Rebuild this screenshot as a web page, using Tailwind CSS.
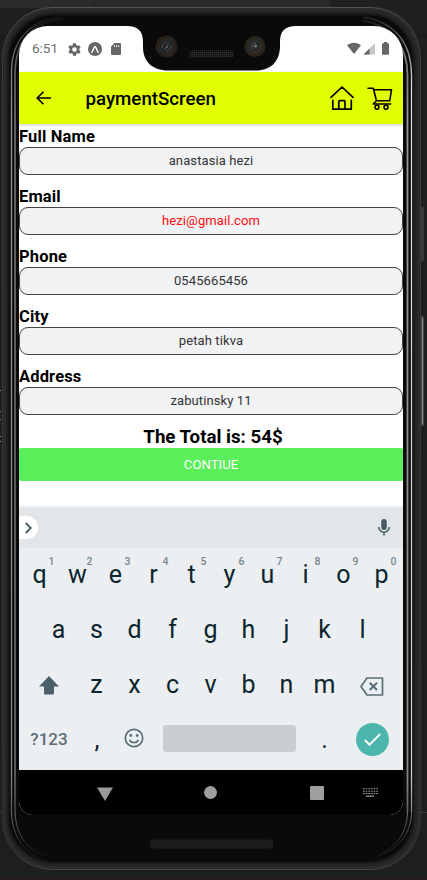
<!DOCTYPE html>
<html lang="en">
<head>
<meta charset="utf-8">
<title>paymentScreen</title>
<script src="https://cdn.jsdelivr.net/npm/@tailwindcss/browser@4"></script>
</head>
<body class="bg-[#1e1e1e] font-[Roboto,sans-serif]">
<div class="relative w-[427px] h-[880px] overflow-hidden pt-[26px] pl-[19px]">
  <!-- device frame -->
  <svg class="absolute inset-0" width="427" height="880" viewBox="0 0 427 880" fill="none">
    <defs>
      <linearGradient id="rim" x1="0" y1="0" x2="0" y2="1"><stop offset="0" stop-color="#555"/><stop offset=".06" stop-color="#3c3c3c"/><stop offset=".95" stop-color="#333"/><stop offset="1" stop-color="#444"/></linearGradient>
      <linearGradient id="shine" gradientUnits="userSpaceOnUse" x1="0" y1="16" x2="0" y2="862"><stop offset="0" stop-color="#111"/><stop offset=".05" stop-color="#777"/><stop offset=".12" stop-color="#999"/><stop offset=".9" stop-color="#888"/><stop offset="1" stop-color="#181818"/></linearGradient>
      <linearGradient id="shineR" gradientUnits="userSpaceOnUse" x1="0" y1="16" x2="0" y2="862"><stop offset="0" stop-color="#222"/><stop offset=".08" stop-color="#ddd"/><stop offset=".9" stop-color="#ccc"/><stop offset="1" stop-color="#181818"/></linearGradient>
      <linearGradient id="fade" gradientUnits="userSpaceOnUse" x1="0" y1="812" x2="0" y2="860"><stop offset="0" stop-color="#777"/><stop offset=".6" stop-color="#333"/><stop offset="1" stop-color="#0e0e0e"/></linearGradient>
      <pattern id="mesh" width="2" height="2" patternUnits="userSpaceOnUse"><rect width="2" height="2" fill="#161616"/><rect width="1" height="1" fill="#363636"/></pattern>
      <pattern id="meshLow" width="2" height="2" patternUnits="userSpaceOnUse"><rect width="2" height="2" fill="#181818"/><rect width="1" height="1" fill="#262626"/></pattern>
    </defs>
    <rect width="427" height="8" fill="#2b2b2b"/><rect x="330" width="97" height="8" fill="#202020"/><rect x="94" width="1" height="7" fill="#222"/>
    <rect y="8" width="427" height="29" fill="#1f1f1f"/><rect y="36" width="427" height="1" fill="#161616"/>
    <path d="M0 812.5H427" stroke="#3c3c3c"/><path d="M0 879.5H427" stroke="#2a171c"/>
    <path d="M0 390.500H1" stroke="#b38867"/><path d="M0 411.500H1M0 419.500H1" stroke="#3d8ca8"/><path d="M0 436.500H1" stroke="#a39a28"/><path d="M0 441.500H1" stroke="#83a67a"/>
    <rect x="420" y="207" width="4" height="54" rx="1" fill="#393939"/>
    <rect x="420" y="316" width="4" height="110" rx="1" fill="#444"/><path d="M422.500 318V424" stroke="#8a8a8a"/>
    <rect x="2.500" y="7.500" width="418" height="862" rx="50" fill="#242424" stroke="url(#rim)"/>
    <rect x="4.500" y="9.500" width="414" height="858" rx="48" stroke="#2d2d2d" stroke-width="2"/>
    <rect x="8.500" y="14.500" width="405" height="848" rx="45" fill="#0a0a0a" stroke="#171717" stroke-width="2"/>
    <path d="M11.500 812V72C11.500 40 30 20 62 17" stroke="url(#shine)" stroke-width="1.300"/>
    <path d="M15 812V75C15 40 31 21 66 19" stroke="url(#shine)" stroke-width="1.600" opacity=".75"/>
    <path d="M11.500 812C12 838 26 856 50 861M15 812C16 836 28 851 46 856" stroke="url(#fade)"/>
    <path d="M411.500 812V75C411.500 45 397 23 364 17" stroke="url(#shineR)" stroke-width="1.300"/>
    <path d="M407.500 812V75C407.500 46 392 26 362 20" stroke="url(#shine)" stroke-width="1.800"/>
    <path d="M411.500 812C411.500 834 396 852 375 857M407.500 812C407 835 394 849 378 855" stroke="url(#fade)"/>
    <rect x="150" y="839.500" width="123" height="9" rx="3" fill="url(#meshLow)"/>
  </svg>

  <main class="relative flex h-[789px] w-[384px] flex-col overflow-hidden rounded-t-[29px] rounded-b-[14px] bg-white">
    <!-- status bar -->
    <div class="relative flex h-[46px] shrink-0 items-center pl-[13px] text-[#666]">
      <span class="w-[36px] text-[13.500px] leading-none text-[#707070]">6:51</span>
      <svg width="13" height="13" viewBox="2 2 20 20" fill="currentColor"><path d="M19.140 12.940c.040-.300.060-.610.060-.940s-.020-.640-.070-.940l2.030-1.580c.180-.140.230-.410.120-.610l-1.920-3.320c-.120-.220-.370-.290-.590-.220l-2.390.960c-.500-.380-1.030-.700-1.620-.940l-.360-2.540c-.040-.240-.240-.410-.480-.410h-3.840c-.240 0-.430.170-.470.410l-.360 2.540c-.590.240-1.130.570-1.620.940l-2.390-.960c-.220-.080-.470 0-.590.220L2.740 8.870c-.120.210-.080.470.120.610l2.030 1.580c-.050.300-.090.630-.090.940s.020.640.070.940l-2.030 1.580c-.180.140-.230.410-.120.610l1.920 3.320c.120.220.370.290.590.220l2.390-.960c.500.380 1.030.700 1.620.940l.360 2.540c.050.240.240.410.480.410h3.840c.240 0 .440-.170.470-.410l.360-2.540c.590-.240 1.130-.560 1.620-.940l2.390.960c.220.080.470 0 .590-.220l1.920-3.320c.120-.220.070-.470-.120-.610zM12 15.600a3.600 3.600 0 110-7.200 3.600 3.600 0 010 7.200z"/></svg>
      <svg class="ml-[7px]" width="14" height="14" viewBox="0 0 14 14"><circle cx="7" cy="7" r="7" fill="currentColor"/><path d="M3.800 10.200C5.200 8.800 6 4.500 7 4.500S8.800 8.800 10.200 10.200" fill="none" stroke="#fff" stroke-width="1.500" stroke-linecap="round"/></svg>
      <svg class="ml-[9px]" width="10" height="12" viewBox="0 0 10 12"><path d="M3.500 0H9a1 1 0 011 1v10a1 1 0 01-1 1H1a1 1 0 01-1-1V3.500z" fill="currentColor"/><path d="M3.500 2v2M5.500 2v2M7.500 2v2" stroke="#fff" stroke-width=".8"/></svg>
      <svg class="ml-auto mr-[14px]" width="42" height="14" viewBox="0 0 42 14"><path d="M0 3.200C4.300-.2 9.700-.2 14 3.200L7 12z" fill="currentColor"/><path d="M28 1V12.500H16.500z" fill="#c6c6c6"/><path d="M22.500 6.500V12.500H16.500z" fill="currentColor"/><path d="M37 0h3v1.300h1.500a.5.500 0 01.500.500V12a.7.700 0 01-.7.700h-5.600A.7.700 0 0135 12V1.800a.5.500 0 01.500-.5H37z" fill="currentColor"/></svg>
      <!-- notch -->
      <svg class="absolute left-0 top-0" width="384" height="46" viewBox="19 26 384 46" fill="none"><path d="M127 26C138 26 143 31 143 42V47C143 62 153 70.500 168 70.500H256C271 70.500 280 61 280 46V42C280 31 285 26 296 26z" fill="#0a0a0a"/>
        <circle cx="166.500" cy="46.500" r="11" fill="#26211c"/><circle cx="166.500" cy="46.500" r="7" fill="#202223" stroke="#34312d"/><path d="M164 50L169 43M162.500 48A5 5 0 01167 42M171 45A5 5 0 01166 51" stroke="#555" stroke-width="1"/><circle cx="167" cy="47" r="1" fill="#666"/>
        <circle cx="255" cy="46.500" r="10.500" fill="#2a251f"/><circle cx="255" cy="46.500" r="6" fill="#242829" stroke="#3a3733"/><path d="M253 49A3.500 3.500 0 01256 43" stroke="#555"/><circle cx="255.500" cy="46" r="1.500" fill="#777"/>
        <rect x="189.500" y="50.500" width="44" height="7" rx="3" fill="url(#mesh)"/></svg>
    </div>
    <!-- header -->
    <header class="z-10 flex h-[52px] shrink-0 items-center bg-[#e2ff00] pl-[17px] pr-[10px] text-black shadow-[0_1px_3px_rgba(0,0,0,0.2)]">
      <svg width="15" height="14" viewBox="0 0 15 14" fill="none" stroke="currentColor" stroke-width="1.600"><path d="M15 7H1.300M7.500.700L1.200 7l6.300 6.300"/></svg>
      <h1 class="ml-[34.500px] mt-[2px] text-[18.700px] font-medium leading-none">paymentScreen</h1>
      <svg class="ml-auto" width="24" height="24" viewBox="0 0 24 24" fill="none" stroke="currentColor" stroke-width="1.700" stroke-linecap="round" stroke-linejoin="round"><path d="M1 11.300L12 1l11 10.300M2.800 14.300v8.900h18.500v-8.900M8.800 23v-7.300c0-.6.4-1 1-1H14c.6 0 1 .4 1 1V23"/></svg>
      <svg class="ml-[13px]" width="26" height="23" viewBox="0 0 26 23" fill="none" stroke="currentColor" stroke-width="1.600" stroke-linecap="round" stroke-linejoin="round"><path d="M1 1.300h5.300l3.200 12.500h13.200l1.800-11H6.700M9.500 13.800L6.300 17h17.400"/><circle cx="10" cy="20.300" r="2"/><circle cx="19" cy="20.300" r="2"/></svg>
    </header>
    <!-- form -->
    <section class="flex h-[383px] shrink-0 flex-col pt-[1px] text-black">
      <label class="flex h-[60px] shrink-0 flex-col pt-[2px] text-[16.500px] font-bold leading-[20px] tracking-[0.150px]">Full Name<span class="flex h-[28px] items-center justify-center rounded-[9px] border border-[#444] bg-[#f1f2f4] text-[13px] font-normal tracking-[0.100px] text-[#333]">anastasia hezi</span></label>
      <label class="flex h-[60px] shrink-0 flex-col pt-[2px] text-[16.500px] font-bold leading-[20px] tracking-[0.150px]">Email<span class="flex h-[28px] items-center justify-center rounded-[9px] border border-[#444] bg-[#f1f2f4] text-[13px] font-normal tracking-[0.100px] text-[#ff0d0d]">hezi@gmail.com</span></label>
      <label class="flex h-[60px] shrink-0 flex-col pt-[2px] text-[16.500px] font-bold leading-[20px] tracking-[0.150px]">Phone<span class="flex h-[28px] items-center justify-center rounded-[9px] border border-[#444] bg-[#f1f2f4] text-[13px] font-normal tracking-[0.100px] text-[#333]">0545665456</span></label>
      <label class="flex h-[60px] shrink-0 flex-col pt-[2px] text-[16.500px] font-bold leading-[20px] tracking-[0.150px]">City<span class="flex h-[28px] items-center justify-center rounded-[9px] border border-[#444] bg-[#f1f2f4] text-[13px] font-normal tracking-[0.100px] text-[#333]">petah tikva</span></label>
      <label class="flex h-[60px] shrink-0 flex-col pt-[2px] text-[16.500px] font-bold leading-[20px] tracking-[0.150px]">Address<span class="flex h-[28px] items-center justify-center rounded-[9px] border border-[#444] bg-[#f1f2f4] text-[13px] font-normal tracking-[0.100px] text-[#333]">zabutinsky 11</span></label>
      <p class="h-[23px] pl-[4px] text-center text-[18.700px] font-bold leading-[24px]">The Total is: 54$</p>
      <button class="h-[33px] shrink-0 rounded-[2px] bg-[#5aee5a] pt-[1px] text-[13.200px] leading-[32px] text-white">CONTIUE</button>
    </section>
    <!-- keyboard -->
    <section class="flex h-[263px] shrink-0 flex-col bg-[#ebeff2] text-[25px] leading-[30px] text-[#0b252e] shadow-[0_-1px_2px_rgba(0,0,0,0.08)]">
      <div class="flex h-[41px] shrink-0 items-center justify-between bg-[#e2e6e9] pr-[13px] text-[#455a64]">
        <span class="flex h-[23px] w-[19px] items-center justify-center rounded-r-full bg-white"><svg width="7" height="12" viewBox="0 0 7 12" fill="none" stroke="currentColor" stroke-width="1.800"><path d="M.8 1l5 5-5 5"/></svg></span>
        <svg width="12" height="17" viewBox="0 0 12 17" fill="none"><rect x="3.300" y="0" width="5.400" height="11" rx="2.700" fill="currentColor"/><path d="M.8 8a5.200 5.200 0 0010.400 0M6 13v3.500" stroke="currentColor" stroke-width="1.500"/></svg>
      </div>
      <div class="flex h-[55px] shrink-0 pl-[1.500px] pt-[12px] text-center">
        <span class="relative w-[38px]">q<sup class="absolute left-[28px] top-[-4px] text-[10.500px] font-medium leading-[11px] text-[#78868c]">1</sup></span>
        <span class="relative w-[38px]">w<sup class="absolute left-[28px] top-[-4px] text-[10.500px] font-medium leading-[11px] text-[#78868c]">2</sup></span>
        <span class="relative w-[38px]">e<sup class="absolute left-[28px] top-[-4px] text-[10.500px] font-medium leading-[11px] text-[#78868c]">3</sup></span>
        <span class="relative w-[38px]">r<sup class="absolute left-[28px] top-[-4px] text-[10.500px] font-medium leading-[11px] text-[#78868c]">4</sup></span>
        <span class="relative w-[38px]">t<sup class="absolute left-[28px] top-[-4px] text-[10.500px] font-medium leading-[11px] text-[#78868c]">5</sup></span>
        <span class="relative w-[38px]">y<sup class="absolute left-[28px] top-[-4px] text-[10.500px] font-medium leading-[11px] text-[#78868c]">6</sup></span>
        <span class="relative w-[38px]">u<sup class="absolute left-[28px] top-[-4px] text-[10.500px] font-medium leading-[11px] text-[#78868c]">7</sup></span>
        <span class="relative w-[38px]">i<sup class="absolute left-[28px] top-[-4px] text-[10.500px] font-medium leading-[11px] text-[#78868c]">8</sup></span>
        <span class="relative w-[38px]">o<sup class="absolute left-[28px] top-[-4px] text-[10.500px] font-medium leading-[11px] text-[#78868c]">9</sup></span>
        <span class="relative w-[38px]">p<sup class="absolute left-[28px] top-[-4px] text-[10.500px] font-medium leading-[11px] text-[#78868c]">0</sup></span>
      </div>
      <div class="flex h-[55px] shrink-0 pl-[20.500px] pt-[12px] text-center">
        <span class="w-[38px]">a</span><span class="w-[38px]">s</span><span class="w-[38px]">d</span><span class="w-[38px]">f</span><span class="w-[38px]">g</span><span class="w-[38px]">h</span><span class="w-[38px]">j</span><span class="w-[38px]">k</span><span class="w-[38px]">l</span>
      </div>
      <div class="flex h-[55px] shrink-0 pt-[12px] text-center">
        <span class="flex w-[58.500px] items-start justify-center pt-[6px] text-[#4a606a]"><svg class="ml-[1px]" width="20" height="19" viewBox="0 0 20 19" fill="currentColor"><path d="M10 0l10 10.500h-5V17.500a1 1 0 01-1 1H6a1 1 0 01-1-1v-7H0z"/></svg></span>
        <span class="w-[38px]">z</span><span class="w-[38px]">x</span><span class="w-[38px]">c</span><span class="w-[38px]">v</span><span class="w-[38px]">b</span><span class="w-[38px]">n</span><span class="w-[38px]">m</span>
        <span class="flex flex-1 items-start justify-center pt-[7px] text-[#5b6d76]"><svg class="mr-[3px]" width="24" height="19" viewBox="0 0 24 19" fill="none" stroke="currentColor" stroke-width="1.700" stroke-linejoin="round"><path d="M7 1h15.500v17H7L1 9.500z"/><path d="M9.800 5.800l7.200 7.200M17 5.800L9.800 13" stroke-width="2"/></svg></span>
      </div>
      <div class="flex h-[57px] shrink-0 items-start text-center">
        <span class="mt-[11px] w-[60px] text-[17px] font-medium leading-[30px] text-[#5b6d76]">?123</span>
        <span class="mt-[12px] w-[36px]">,</span>
        <svg class="ml-[9px] mt-[15px] text-[#5b6d76]" width="20" height="20" viewBox="0 0 20 20" fill="none" stroke="currentColor" stroke-width="1.700"><circle cx="10" cy="10" r="8.700"/><path d="M5.700 11.800c1.600 3.600 7 3.600 8.600 0"/><circle cx="6.800" cy="7.500" r="1.400" fill="currentColor" stroke="none"/><circle cx="13.200" cy="7.500" r="1.400" fill="currentColor" stroke="none"/></svg>
        <span class="ml-[19px] mt-[12px] h-[27px] w-[133px] rounded-[3px] bg-[#c9ced1]"></span>
        <span class="ml-[9px] mt-[12px] w-[39px]">.</span>
        <span class="ml-[12px] mt-[10px] flex size-[33px] items-center justify-center rounded-full bg-[#4db6ac]"><svg width="17" height="13" viewBox="0 0 17 13" fill="none" stroke="#fff" stroke-width="1.900"><path d="M.8 7l4.700 4.700L16.200 1"/></svg></span>
      </div>
    </section>
    <!-- navigation bar -->
    <nav class="flex h-[45px] shrink-0 items-center bg-black pl-[77.500px] text-[#9a9a9a]">
      <svg class="mt-[2px]" width="16" height="14" viewBox="0 0 16 14" fill="currentColor"><path d="M0 .5h16L8 14z"/></svg>
      <span class="ml-[91.500px] size-[13px] rounded-full bg-[#9e9e9e]"></span>
      <span class="ml-[92.500px] size-[14px] rounded-[1px] bg-[#9e9e9e]"></span>
      <svg class="ml-[39px]" width="15" height="9" viewBox="0 0 15 9" stroke="currentColor" fill="none"><path d="M0 .7h15M0 3.200h15M0 5.500h15" stroke-width="1" stroke-dasharray="1.700 .95"/><path d="M3 8.200h8" stroke-width="1.200"/></svg>
    </nav>
  </main>
</div>
</body>
</html>
